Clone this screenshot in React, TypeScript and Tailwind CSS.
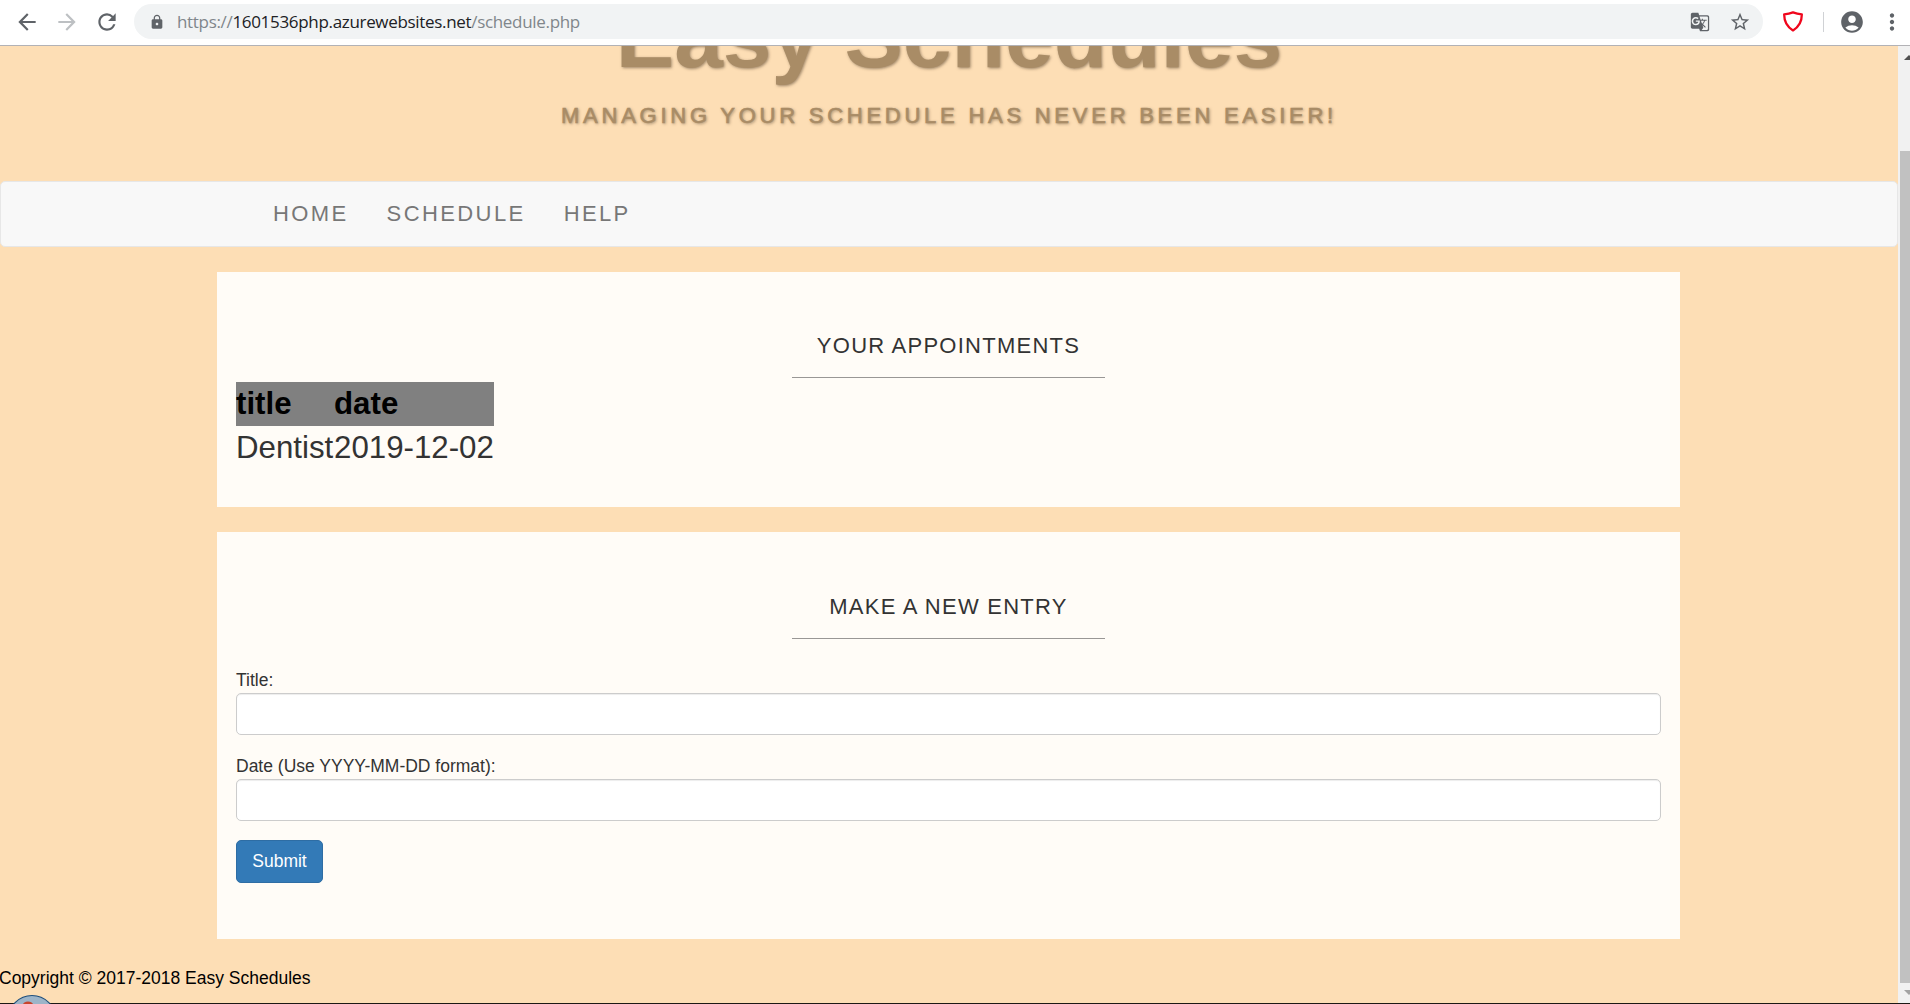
import { useId, type ReactNode } from "react";
import {
  MdAccountCircle,
  MdArrowBack,
  MdArrowForward,
  MdGTranslate,
  MdLock,
  MdMoreVert,
  MdRefresh,
  MdStarBorder,
} from "react-icons/md";

function BrowserBar() {
  return (
    <div className="flex h-[46px] shrink-0 items-start border-b border-[#b2b2b6] bg-white text-[#5f6368]">
      <div className="flex h-[43px] w-[134px] shrink-0 items-center pl-[14px]">
        <MdArrowBack size={26} />
        <MdArrowForward size={26} className="ml-[14px] text-[#bdc0c3]" />
        <MdRefresh size={26} className="ml-[14px]" />
      </div>
      <div className="mt-1 flex h-[35px] w-[1629px] shrink-0 items-center rounded-full bg-[#f1f3f4] pr-[12px] pl-[15px]">
        <MdLock size={16} />
        <div className="ml-[12px] flex-1 font-['Open_Sans','Noto_Sans',sans-serif] text-[17px] leading-[34px] tracking-[-0.32px] whitespace-nowrap text-[#80868b]">
          <span>https://</span>
          <span className="text-[#202124]">1601536php.azurewebsites.net</span>
          <span>/schedule.php</span>
        </div>
        <MdGTranslate size={20} />
        <MdStarBorder size={22} className="ml-[19px]" />
      </div>
      <div className="flex h-[43px] flex-1 items-center">
        <svg className="ml-[20px] h-[21px] w-[20px]" viewBox="0 0 20 21" fill="none">
          <path
            d="M1.2 3.3 Q6 2.8 10 1.3 Q14 2.8 18.8 3.3 Q19 14 10 19.4 Q1 14 1.2 3.3 Z"
            stroke="#f0061c"
            strokeWidth="2.3"
            strokeLinejoin="round"
          />
        </svg>
        <div className="ml-[20px] h-5 w-px bg-[#d0d2d5]" />
        <MdAccountCircle size={26} className="ml-[15px]" />
        <MdMoreVert size={26} className="ml-[14px] shrink-0" />
      </div>
    </div>
  );
}

function Card({
  title,
  className,
  titleClassName,
  children,
}: {
  title: string;
  className: string;
  titleClassName: string;
  children: ReactNode;
}) {
  return (
    <section className={`ml-[217px] w-[1463px] bg-[#fffcf7] px-[19px] text-[#333333] ${className}`}>
      <h2
        className={`mx-auto w-[313px] border-b border-[#999795] text-center text-[22px] leading-[28px] tracking-[1.25px] ${titleClassName}`}
      >
        {title}
      </h2>
      {children}
    </section>
  );
}

function Field({ label }: { label: string }) {
  const id = useId();
  return (
    <div className="mb-[19px]">
      <label htmlFor={id} className="block h-[25px] leading-[25px]">
        {label}
      </label>
      <input
        id={id}
        className="block h-[42px] w-full rounded-[5px] border border-[#cccccc] bg-white px-4 shadow-[inset_0_1px_1px_rgba(0,0,0,0.075)] outline-none"
      />
    </div>
  );
}

function ScrollBar() {
  return (
    <div className="flex w-3 shrink-0 flex-col overflow-hidden bg-[#f1f1f1]">
      <svg className="mt-[9px] ml-[6px] h-[5px] w-[10px] shrink-0" viewBox="0 0 10 5">
        <path d="M0 5 L5 0 L10 5 Z" fill="#505050" />
      </svg>
      <div className="mt-[91px] ml-[2px] h-[832px] w-[10px] shrink-0 bg-[#c1c1c1]" />
      <svg className="mt-[7px] ml-[6px] h-[5px] w-[10px] shrink-0" viewBox="0 0 10 5">
        <path d="M0 0 L5 5 L10 0 Z" fill="#a3a3a3" />
      </svg>
    </div>
  );
}

export default function App() {
  return (
    <div className="relative flex h-[1004px] w-[1910px] flex-col overflow-hidden font-['Liberation_Sans',Arial,sans-serif] text-[17.5px]">
      <BrowserBar />
      <div className="flex h-[957px] shrink-0">
        <main className="w-[1898px] shrink-0 overflow-hidden bg-[#fddeb5]">
          <header className="flex h-[135px] flex-col items-center overflow-hidden text-center whitespace-nowrap text-[#a98c66] [text-shadow:1px_1px_3px_rgba(80,60,40,0.55)]">
            <h1 className="-mt-[59px] h-[100px] text-[87.5px] leading-[100px] font-bold">Easy Schedules</h1>
            <p className="mt-[14px] text-[22px] leading-[30px] tracking-[3.75px] [-webkit-text-stroke:0.6px_#a98c66]">
              MANAGING YOUR SCHEDULE HAS NEVER BEEN EASIER!
            </p>
          </header>
          <nav className="flex h-[66px] items-center gap-[38px] rounded-[5px] border border-[#e7e7e7] bg-[#f8f8f8] pl-[272px] text-[22px] leading-[30px] tracking-[2.4px] text-[#777777]">
            <a>HOME</a>
            <a>SCHEDULE</a>
            <a>HELP</a>
          </nav>
          <Card title="YOUR APPOINTMENTS" className="mt-[25px] h-[235px]" titleClassName="h-[106px] pt-[60px]">
            <table className="mt-[4px] w-[258px] border-collapse text-left text-[31.25px] leading-[44px]">
              <thead>
                <tr className="bg-[#808080] text-black">
                  <th className="w-[98px] p-0">title</th>
                  <th className="p-0">date</th>
                </tr>
              </thead>
              <tbody>
                <tr>
                  <td className="p-0">Dentist</td>
                  <td className="p-0">2019-12-02</td>
                </tr>
              </tbody>
            </table>
          </Card>
          <Card title="MAKE A NEW ENTRY" className="mt-[25px] h-[407px]" titleClassName="h-[107px] pt-[61px]">
            <form className="pt-[29px]" onSubmit={(e) => e.preventDefault()}>
              <Field label="Title:" />
              <Field label="Date (Use YYYY-MM-DD format):" />
              <button className="h-[43px] w-[87px] rounded-[5px] border border-[#2e6da4] bg-[#337ab7] text-white">
                Submit
              </button>
            </form>
          </Card>
          <footer className="mt-[27px] -ml-px leading-[25px] text-black">Copyright © 2017-2018 Easy Schedules</footer>
        </main>
        <ScrollBar />
      </div>
      <div className="h-px shrink-0 bg-[#1c1814]" />
      <svg className="absolute bottom-0 left-[8px] h-[10px] w-[48px]" viewBox="0 0 48 10">
        <circle cx="24" cy="25" r="23.5" fill="#9db4c8" stroke="#1f4f7c" strokeWidth="1.2" />
        <ellipse cx="20" cy="10.5" rx="5" ry="3" fill="#c8452c" />
      </svg>
    </div>
  );
}
